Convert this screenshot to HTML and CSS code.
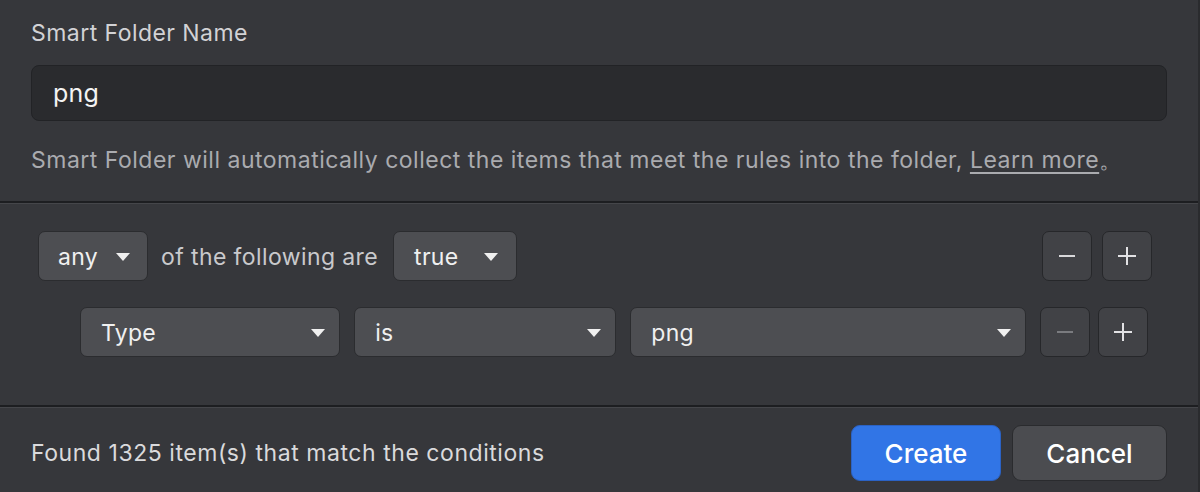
FILE: index.html
```html
<!DOCTYPE html>
<html>
<head>
<meta charset="utf-8">
<link rel="stylesheet" href="styles.css">
</head>
<body>
<div class="dialog">
  <section class="name-section">
    <div class="label">Smart Folder Name</div>
    <div class="input">png</div>
    <div class="desc">Smart Folder will automatically collect the items that meet the rules into the folder, <span class="link">Learn more</span>。</div>
  </section>
  <div class="divider"></div>
  <section class="rules">
    <div class="row row-top">
      <div class="select sel-any"><span>any</span><span class="caret"></span></div>
      <span class="text">of the following are</span>
      <div class="select sel-true"><span>true</span><span class="caret"></span></div>
      <div class="pm pm-top">
        <div class="pmbtn"><span class="minus"></span></div>
        <div class="pmbtn"><span class="plus"></span></div>
      </div>
    </div>
    <div class="row row-rule">
      <div class="select sel-type"><span>Type</span><span class="caret"></span></div>
      <div class="select sel-is"><span>is</span><span class="caret"></span></div>
      <div class="select sel-val"><span>png</span><span class="caret"></span></div>
      <div class="pm pm-rule">
        <div class="pmbtn disabled"><span class="minus"></span></div>
        <div class="pmbtn"><span class="plus"></span></div>
      </div>
    </div>
  </section>
  <div class="divider"></div>
  <footer class="footer">
    <span class="found">Found 1325 item(s) that match the conditions</span>
    <div class="actions">
      <button class="btn primary">Create</button>
      <button class="btn secondary">Cancel</button>
    </div>
  </footer>
</div>
</body>
</html>
```

FILE: styles.css
```css
* { box-sizing: border-box; }
html, body { margin: 0; padding: 0; }
body {
  background: #36373b;
  font-family: Inter, "Noto Sans", "Liberation Sans", sans-serif;
  width: 1200px;
  height: 492px;
  overflow: hidden;
}
.dialog {
  width: 1200px;
  height: 492px;
  display: flex;
  flex-direction: column;
  border-right: 2px solid #2a2b2e;
}
.name-section {
  height: 201px;
  padding: 19px 31px 0 31px;
  display: flex;
  flex-direction: column;
}
.label {
  font-size: 23px;
  line-height: 28px;
  letter-spacing: 0.45px;
  color: #d2d2d5;
}
.input {
  margin-top: 18px;
  height: 56px;
  width: 1136px;
  background: #2a2b2e;
  border: 1.5px solid #222326;
  border-radius: 8px;
  padding-left: 21px;
  display: flex;
  align-items: center;
  font-size: 25px;
  letter-spacing: 0.2px;
  color: #f3f3f3;
}
.desc {
  margin-top: 25px;
  font-size: 23px;
  line-height: 28px;
  color: #aaabaf;
  letter-spacing: 0.5px;
  white-space: nowrap;
}
.link { text-decoration: underline; text-underline-offset: 4px; }
.divider {
  height: 3px;
  border-top: 2px solid #1d1e21;
  background: #45464a;
}
.rules {
  height: 201px;
  padding-top: 27px;
  display: flex;
  flex-direction: column;
  gap: 26px;
}
.row {
  display: flex;
  align-items: center;
  height: 50px;
}
.row-top { padding-left: 38px; padding-right: 46px; }
.row-rule { padding-left: 80px; padding-right: 50px; gap: 14px; }
.select {
  height: 50px;
  background: #4d4e52;
  border: 1.5px solid #2b2c2f;
  border-radius: 7px;
  display: flex;
  align-items: center;
  justify-content: space-between;
  padding-top: 2px;
  font-size: 23px;
  letter-spacing: 0.3px;
  color: #f0f0f0;
}
.caret {
  width: 0; height: 0;
  border-left: 7px solid transparent;
  border-right: 7px solid transparent;
  border-top: 8px solid #f0f0f0;
}
.sel-any { width: 110px; padding-left: 19px; padding-right: 17px; }
.sel-true { width: 124px; padding-left: 20px; padding-right: 18px; }
.text {
  font-size: 23px;
  letter-spacing: 0.4px;
  color: #c9c9cc;
  margin: 2px 15px 0 13px;
}
.sel-type { width: 261px; padding-left: 20px; padding-right: 14px; }
.sel-is { width: 263px; padding-left: 20px; padding-right: 14px; }
.sel-val { width: 397px; padding-left: 20px; padding-right: 14px; }
.pm { margin-left: auto; display: flex; }
.pm-top { gap: 10px; }
.pm-rule { gap: 8px; }
.pmbtn {
  width: 50px; height: 50px;
  background: #414246;
  border: 1.5px solid #26272a;
  border-radius: 7px;
  display: flex; align-items: center; justify-content: center;
}
.minus { width: 16px; height: 2px; background: #d8d8da; }
.plus { width: 18px; height: 18px; position: relative; }
.plus::before, .plus::after {
  content: ""; position: absolute; background: #e2e2e4;
}
.plus::before { left: 0; top: 8px; width: 18px; height: 2px; }
.plus::after { left: 8px; top: 0; width: 2px; height: 18px; }
.disabled .minus { background: #7a7b7f; }
.footer {
  flex: 1;
  display: flex;
  align-items: center;
  padding: 6px 31px 0 31px;
}
.found { font-size: 23px; letter-spacing: 0.55px; color: #dadadc; }
.actions { margin-left: auto; display: flex; gap: 11px; }
.btn {
  height: 56px;
  border-radius: 9px;
  font-family: inherit;
  font-size: 26px;
  font-weight: 500;
  color: #ffffff;
  cursor: pointer;
}
.primary {
  width: 150px;
  background: #3175e6;
  border: 1.5px solid #2b62c4;
}
.secondary {
  width: 155px;
  background: #4b4c50;
  border: 1.5px solid #2a2b2e;
}
```
